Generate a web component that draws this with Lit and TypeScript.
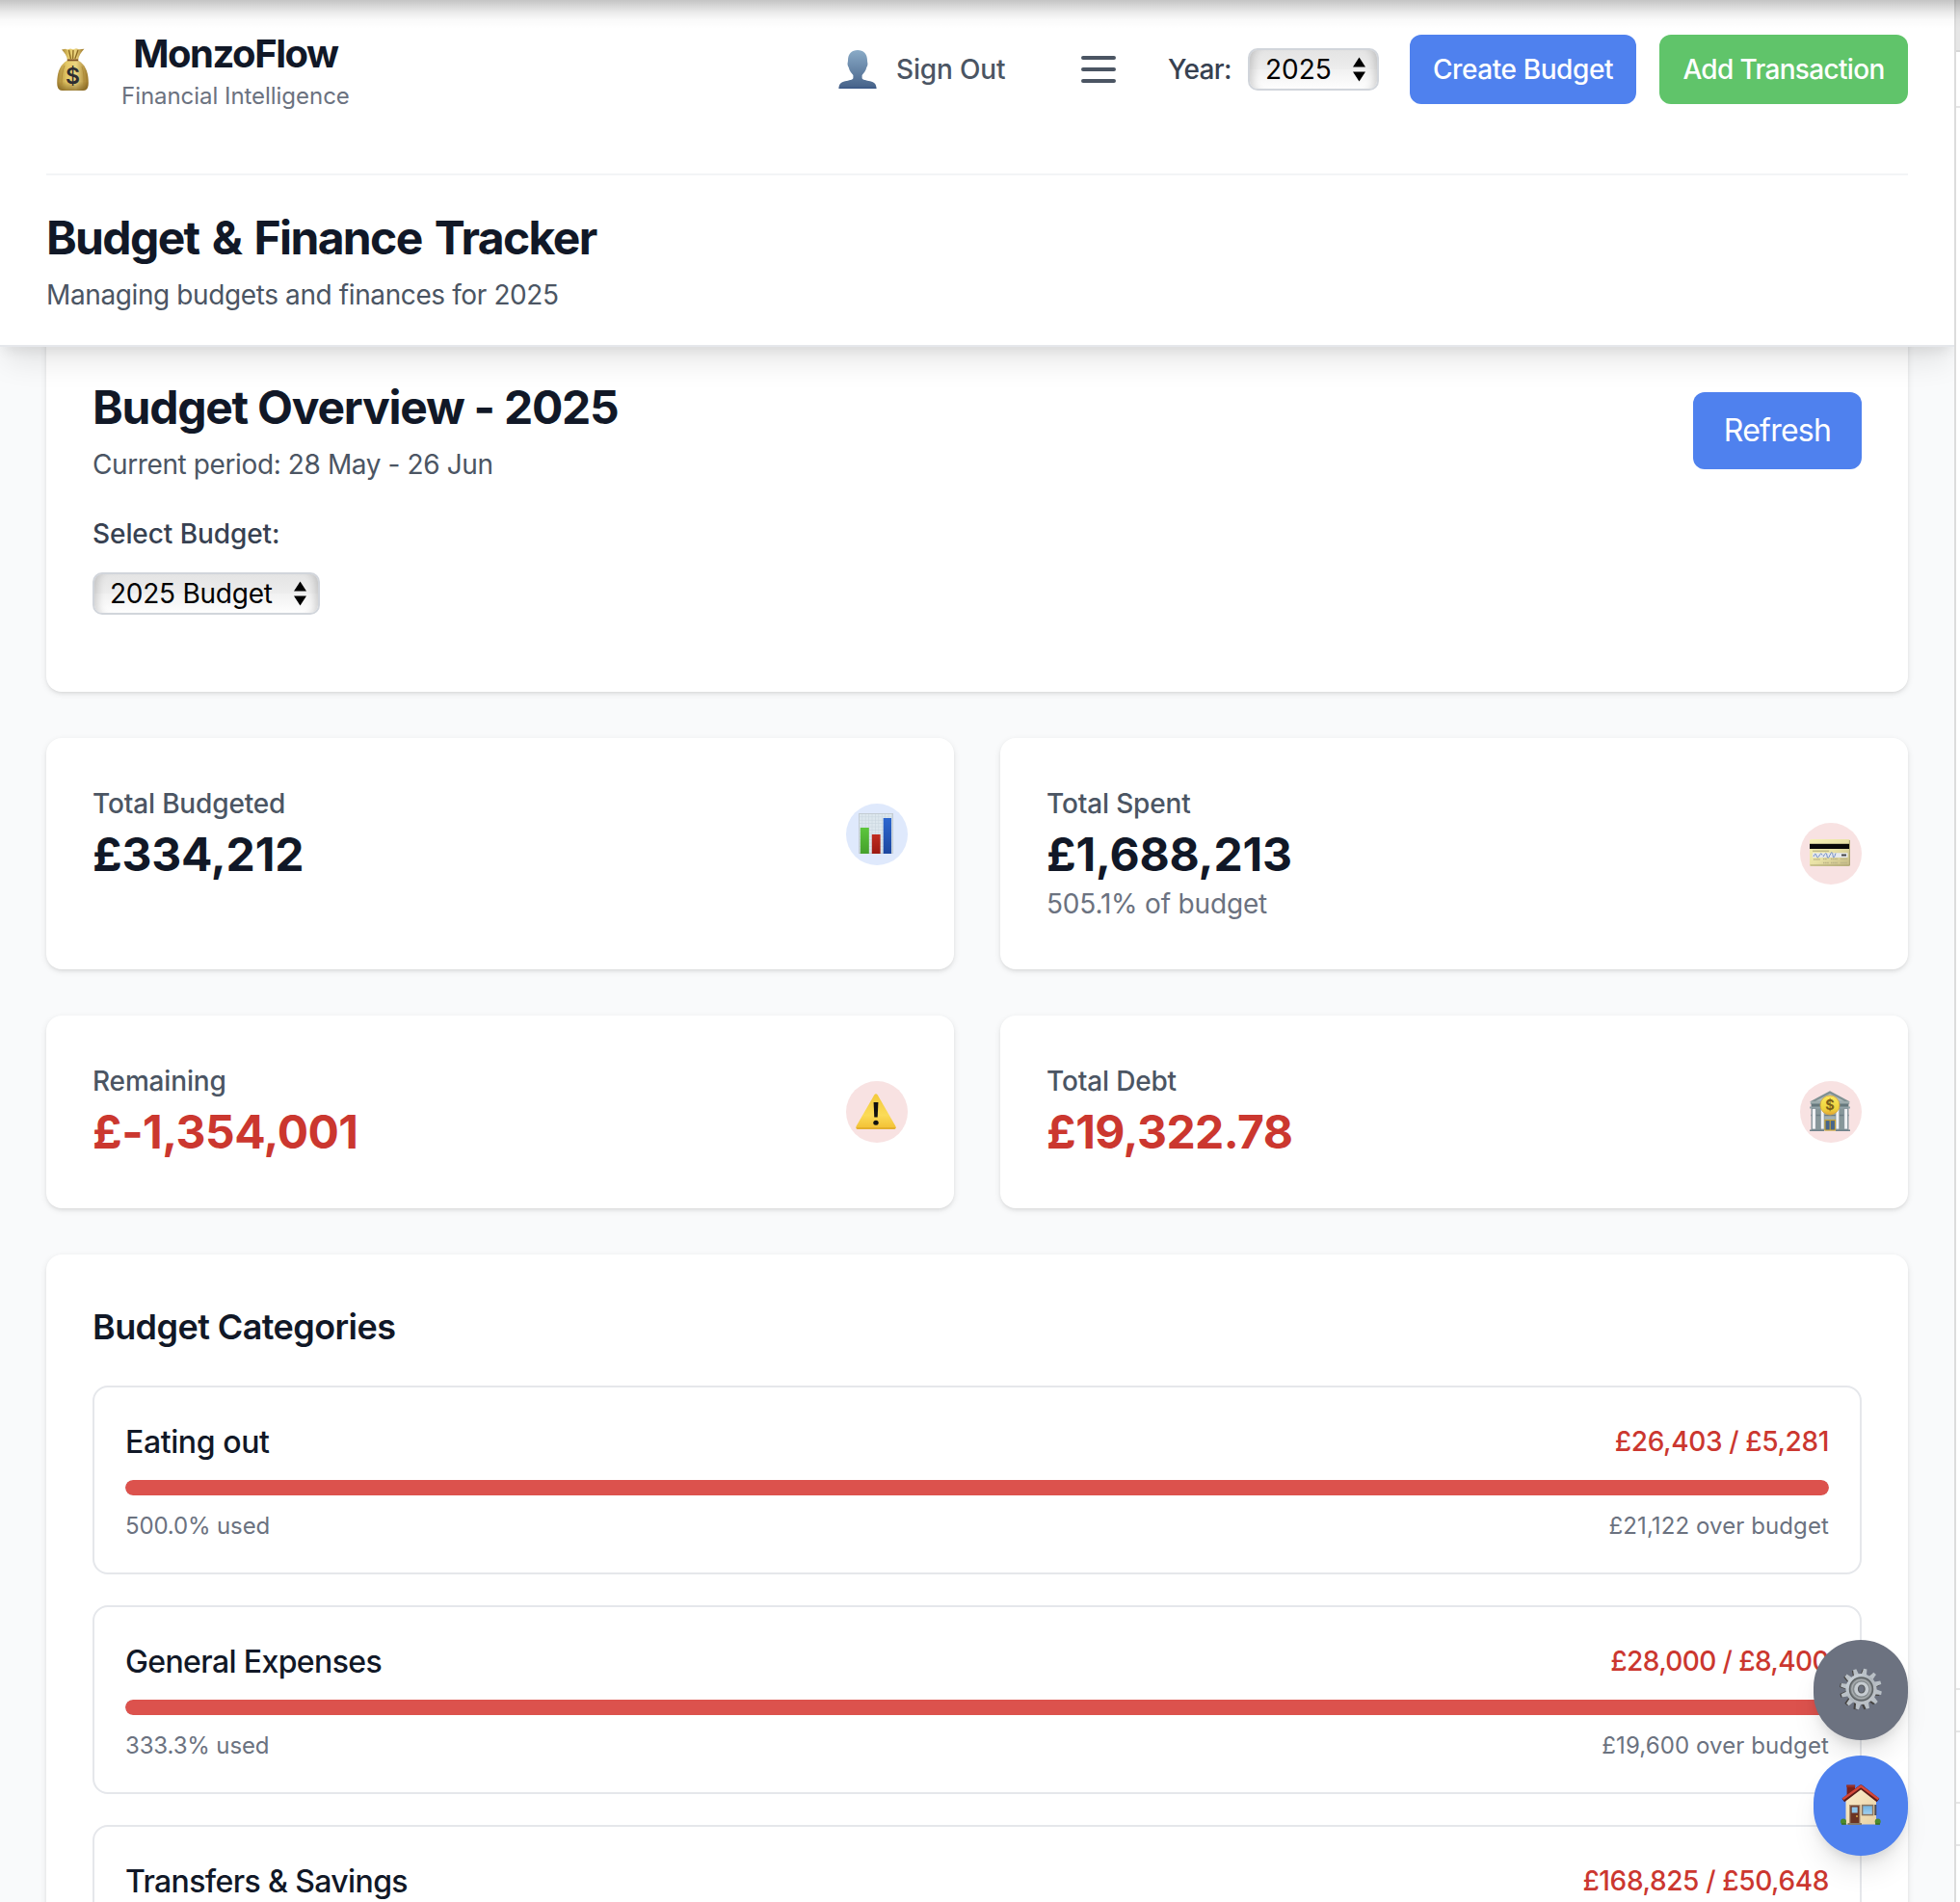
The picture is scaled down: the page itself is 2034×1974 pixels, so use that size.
import { LitElement, html, css, svg } from "lit";
import { customElement, property } from "lit/decorators.js";
import { classMap } from "lit/directives/class-map.js";

interface Stat {
  label: string;
  value: string;
  note?: string;
  icon: string;
  negative?: boolean;
  tint: "blue" | "red";
  tight?: boolean;
}

interface Category {
  name: string;
  spent: number;
  budget: number;
  tight?: boolean;
  tightAmount?: boolean;
}

const STATS: Stat[] = [
  { label: "Total Budgeted", value: "£334,212", icon: "chart", tint: "blue" },
  { label: "Total Spent", value: "£1,688,213", note: "505.1% of budget", icon: "card", tint: "red" },
  { label: "Remaining", value: "£-1,354,001", icon: "warning", tint: "red", negative: true, tight: true },
  { label: "Total Debt", value: "£19,322.78", icon: "bank", tint: "red", negative: true, tight: true },
];

const CATEGORIES: Category[] = [
  { name: "Eating out", spent: 26403, budget: 5281 },
  { name: "General Expenses", spent: 28000, budget: 8400, tight: true, tightAmount: true },
  { name: "Transfers & Savings", spent: 168825, budget: 50648, tight: true },
];

const pounds = (n: number) => "£" + n.toLocaleString("en-GB");

const ICONS: Record<string, { w: number; h: number; art: unknown }> = {
  bag: {
    w: 33,
    h: 44,
    art: svg`
      <defs>
        <linearGradient id="g" x1="0" x2="1"><stop offset="0" stop-color="#a58335"/><stop offset=".3" stop-color="#e3c765"/><stop offset=".6" stop-color="#ecd581"/><stop offset="1" stop-color="#9b7526"/></linearGradient>
        <linearGradient id="v" x1="0" x2="0" y1="0" y2="1"><stop offset=".7" stop-color="#6b4c10" stop-opacity="0"/><stop offset="1" stop-color="#6b4c10" stop-opacity=".6"/></linearGradient>
      </defs>
      <path d="M5 1.4 L9 .8 11 1.6 14 .4 17 1.2 20 .2 23 1.2 28.4 .8 C25.5 4 22.6 8 22 12.5 H11 C10.6 8 8 4.500 5 1.400Z" fill="url(#g)"/>
      <path d="M12.500 2 L14.500 11 M17 2 L16.600 11 M22 2 L18.800 11" stroke="#8c6a22" stroke-width="1.300" fill="none"/>
      <path d="M11 12.500 C4 17 1 23 .3 33 C0 40 1 44 6 44 H27 C32 44 33 40 32.700 33 C32 23 29 17 22 12.500Z" fill="url(#g)"/>
      <path d="M11 12.500 C4 17 1 23 .3 33 C0 40 1 44 6 44 H27 C32 44 33 40 32.700 33 C32 23 29 17 22 12.500Z" fill="url(#v)"/>
      <path d="M10.800 12.400 H22.200" stroke="#7d4f25" stroke-width="1.800"/>
      <path d="M8 18 C5.500 24 5 30 5 38 M26 19 C28 25 28.300 31 28 38" stroke="#a98432" stroke-width="1" fill="none" opacity=".7"/>
      <text x="16.500" y="37.200" text-anchor="middle" font-family="Inter, sans-serif" font-size="23" font-weight="600" fill="#2d2c31">$</text>`,
  },
  person: {
    w: 40,
    h: 40,
    art: svg`
      <defs><linearGradient id="g" x1="0" x2="0" y1="0" y2="1"><stop offset="0" stop-color="#8aabc7"/><stop offset="1" stop-color="#456188"/></linearGradient></defs>
      <path d="M20 0 C26 0 30 4 30 10.500 C30 13 30.800 13.500 30.300 15.500 C30 17 29.500 17 29.300 18 C28.600 21.500 26 24.500 24.600 26 V29 C25 31 29 31.300 33 32.300 C37.500 33.400 39.500 35.500 39.500 40 H.5 C.5 35.500 2.500 33.400 7 32.300 C11 31.300 15 31 15.400 29 V26 C14 24.500 11.400 21.500 10.700 18 C10.500 17 10 17 9.700 15.500 C9.200 13.500 10 13 10 10.500 C10 4 14 0 20 0Z" fill="url(#g)"/>
      <path d="M.8 39.300 H39.200" stroke="#3c5a88" stroke-width="1.400"/>`,
  },
  menu: {
    w: 36,
    h: 28,
    art: svg`<path d="M2 2 H34 M2 14 H34 M2 26 H34" stroke="#4b5563" stroke-width="4" stroke-linecap="round"/>`,
  },
  arrows: {
    w: 13,
    h: 26,
    art: svg`<path d="M6.500 .5 L13 10.500 H0Z M6.500 25.500 L13 15.500 H0Z" fill="#000"/>`,
  },
  chart: {
    w: 36,
    h: 42,
    art: svg`
      <defs>
        <pattern id="p" width="3.400" height="3.400" patternUnits="userSpaceOnUse"><path d="M0 .4 H3.400 M.4 0 V3.400" stroke="#c9d5de" stroke-width=".6"/></pattern>
        <linearGradient id="a" x1="0" x2="0" y1="0" y2="1"><stop offset="0" stop-color="#5cc63c"/><stop offset="1" stop-color="#45a02c"/></linearGradient>
        <linearGradient id="b" x1="0" x2="0" y1="0" y2="1"><stop offset="0" stop-color="#c12c20"/><stop offset="1" stop-color="#9c1a12"/></linearGradient>
        <linearGradient id="c" x1="0" x2="0" y1="0" y2="1"><stop offset="0" stop-color="#2c66cf"/><stop offset="1" stop-color="#1d47a0"/></linearGradient>
      </defs>
      <rect width="36" height="42" fill="#dde7ee"/><rect width="36" height="42" fill="url(#p)"/>
      <rect x=".5" y=".5" width="35" height="41" fill="none" stroke="#c4ccd3"/>
      <rect x="1.800" y="15" width="9" height="27" fill="url(#a)"/>
      <rect x="13.800" y="22" width="8.800" height="20" fill="url(#b)"/>
      <rect x="25.700" y="5" width="8.300" height="37" fill="url(#c)"/>`,
  },
  card: {
    w: 42,
    h: 28,
    art: svg`
      <defs><linearGradient id="g" x1="0" x2="1" y1="0" y2="1"><stop offset="0" stop-color="#f7f3b4"/><stop offset=".5" stop-color="#e9e2a6"/><stop offset="1" stop-color="#c3b883"/></linearGradient></defs>
      <rect width="42" height="28" rx="1.800" fill="url(#g)"/>
      <path d="M.5 27 H41.500 M41.400 1 V27" stroke="#aca375" stroke-width="1"/>
      <rect y="4.800" width="41" height="5.200" fill="#0a0a08"/>
      <rect x="3" y="11.700" width="17" height="1" fill="#b0aa7c"/>
      <rect x="3" y="14.200" width="36.500" height="4.800" fill="#e6e9ee"/>
      <path d="M4 18 Q6 13 7 17 T10 17 T13 16.500 M14 18.200 Q17.500 11.500 18 17 T21 16.500 T24 16.500 T27 14.500" stroke="#7590c4" stroke-width="1" fill="none"/>
      <rect x="33" y="15.500" width="5" height="2" fill="#474747"/>
      <path d="M4 21 H11 M14 20.500 H18 M22 20.500 H29 M32 20.500 H39 M14 24.500 H20 M22 24.500 H29 M32 24.500 H39" stroke="#bbb286" stroke-width="1.300" stroke-dasharray="1.500 .6"/>`,
  },
  warning: {
    w: 42,
    h: 37,
    art: svg`
      <defs><linearGradient id="g" x1="0" x2="0" y1="0" y2="1"><stop offset="0" stop-color="#f3c93a"/><stop offset=".6" stop-color="#fbdb58"/><stop offset="1" stop-color="#f2bf32"/></linearGradient></defs>
      <path d="M19.200 1.400 Q21 -1 22.800 1.400 L41.500 34 Q42.500 37 39.500 37 H2.500 Q-.5 37 .5 34Z" fill="url(#g)"/>
      <path d="M1.500 36 H40.500" stroke="#d9a42a" stroke-width="1.400" stroke-linecap="round" opacity=".8"/>
      <path d="M18.600 9 H23.400 L22.700 24.500 H19.300Z" fill="#111"/>
      <ellipse cx="21" cy="30.300" rx="2.700" ry="2.500" fill="#111"/>`,
  },
  bank: {
    w: 42,
    h: 42,
    art: svg`
      <defs><linearGradient id="g" x1="0" x2="0" y1="0" y2="1"><stop offset="0" stop-color="#fbe75c"/><stop offset=".7" stop-color="#efd33c"/><stop offset="1" stop-color="#e3a534"/></linearGradient></defs>
      <rect x="1.500" y="17" width="39" height="24" fill="#879799"/>
      <path d="M0 11.500 L21 .3 42 11.500Z" fill="#7f9092"/>
      <path d="M6 10.700 L21 2.900 36 10.700Z" fill="#b0bcbb"/>
      <rect x=".8" y="11" width="40.400" height="3" fill="#9dabac"/>
      <rect x="1.600" y="13.500" width="38.800" height="3.500" fill="#65787d"/>
      <rect x="0" y="16.500" width="42" height="2" fill="#93a3a7"/>
      <rect x="12" y="19" width="18" height="22" fill="#a3b1b2"/>
      <path d="M1.500 25.500 H40.500" stroke="#6c7d84" stroke-width="1.500"/>
      <g fill="#f1f3f4" stroke="#7d8b94" stroke-width=".7"><rect x="2.500" y="18.500" width="3.800" height="21.500"/><rect x="11.300" y="18.500" width="3.800" height="21.500"/><rect x="27" y="18.500" width="3.800" height="21.500"/><rect x="35.800" y="18.500" width="3.800" height="21.500"/></g>
      <rect x="16" y="30.500" width="10.500" height="10.500" fill="#46658c" stroke="#c5a236" stroke-width="1.200"/><path d="M21.200 30.500 V41" stroke="#c5a236" stroke-width="1.200"/>
      <path d="M0 41.300 H15 M27 41.300 H42" stroke="#71828a" stroke-width="1.400"/>
      <circle cx="21" cy="15" r="10" fill="url(#g)" stroke="#d9a73b" stroke-width=".8"/>
      <text x="21" y="20.200" text-anchor="middle" font-family="Inter, sans-serif" font-size="14.500" font-weight="700" fill="#7c5f1a">$</text>`,
  },
  gear: {
    w: 44,
    h: 44,
    art: svg`
      <defs><linearGradient id="g" x1="0" x2="1" y1="0" y2="1"><stop offset="0" stop-color="#d3dbe2"/><stop offset=".5" stop-color="#aeb5bb"/><stop offset="1" stop-color="#c6cace"/></linearGradient></defs>
      <g transform="translate(-1 .6)" fill="#44423f">
        ${Array.from({ length: 12 }, (_, i) => svg`<path d="M19.400 8 L20.300 1 H24.200 L25 8Z" transform="rotate(${i * 30 + 12} 22 22)"/>`)}
      </g>
      <g fill="url(#g)">
        ${Array.from({ length: 12 }, (_, i) => svg`<path d="M19.300 8 L20.600 .6 H24 L25 8Z" fill="#b9c0c6" transform="rotate(${i * 30 + 12} 22.500 22)"/>`)}
        <circle cx="22.500" cy="22" r="16"/>
      </g>
      <circle cx="22.500" cy="22" r="12" fill="#858b8e" stroke="#5d6264" stroke-width="1.500"/>
      <circle cx="22.500" cy="22" r="9.700" fill="none" stroke="#a9aeb0" stroke-width="1.300"/>
      <circle cx="22.800" cy="22" r="7.600" fill="#c6ccd1"/>
      <ellipse cx="22.800" cy="22" rx="3.300" ry="4" fill="#6c7280" stroke="#55585b" stroke-width="1.200"/>`,
  },
  house: {
    w: 42,
    h: 42,
    art: svg`
      <defs>
        <linearGradient id="g" x1="0" x2="1" y1="0" y2="1"><stop offset="0" stop-color="#fbeccb"/><stop offset="1" stop-color="#e8d2a4"/></linearGradient>
        <linearGradient id="w" x1="0" x2="0" y1="0" y2="1"><stop offset="0" stop-color="#6fb2e0"/><stop offset="1" stop-color="#a4d1ef"/></linearGradient>
      </defs>
      <rect x="6.600" y="1" width="8.400" height="13" fill="#7c211a"/><rect x="6.200" y=".4" width="9" height="2.400" fill="#9a3128"/>
      <path d="M5.500 16 L21.500 3.500 37 16 V41.500 H5.500Z" fill="url(#g)"/>
      <path d="M36.300 21 V32" stroke="#4c4b55" stroke-width="2"/>
      <path d="M2.800 16.500 L21.200 2.600 39 16.500" fill="none" stroke="#5b1c18" stroke-width="4.400" stroke-linejoin="round"/>
      <path d="M2.500 15.300 L21.200 1.800 39.300 15.300" fill="none" stroke="#d3473a" stroke-width="2.500" stroke-linejoin="round"/>
      <rect x="9" y="21" width="11.500" height="20" fill="#a98f72"/><rect x="10.300" y="22.200" width="9" height="18.800" fill="#6b3424"/>
      <rect x="11.700" y="23.500" width="6" height="6" fill="#8ec5ea"/><circle cx="17" cy="33" r=".9" fill="#e9b64c"/>
      <rect x="22.600" y="21.600" width="11" height="10" fill="url(#w)" stroke="#8a7560" stroke-width="1.500"/>
      <path d="M7.500 41 H22" stroke="#847a6c" stroke-width="2"/>
      <circle cx="3" cy="38.500" r="3" fill="#4d8a2c"/><circle cx="38.700" cy="38.500" r="3" fill="#4d8a2c"/><path d="M1 41 H6 M36 41 H41" stroke="#3d6f22" stroke-width="1.500"/>`,
  },
};

@customElement("app-icon")
export class AppIcon extends LitElement {
  static styles = css`
    :host { display: block; flex: none; }
    svg { display: block; }
  `;

  @property() name = "";

  render() {
    const icon = ICONS[this.name];
    return html`<svg width=${icon.w} height=${icon.h} viewBox="0 0 ${icon.w} ${icon.h}" fill="none">${icon.art}</svg>`;
  }
}

@customElement("select-box")
export class SelectBox extends LitElement {
  static styles = css`
    :host {
      display: flex;
      align-items: center;
      justify-content: space-between;
      box-sizing: border-box;
      height: 44px;
      padding: 0 12px 0 16px;
      border: 2px solid #d1d5db;
      border-radius: 10px;
      background: linear-gradient(#e4e4e4, #ededed 50%, #f1f1f1 51%, #fefefe);
      box-shadow: inset 10px 0 8px -7px rgba(0, 0, 0, 0.17), inset -10px 0 8px -7px rgba(0, 0, 0, 0.17);
      color: #000;
      font-size: 28px;
      line-height: 40px;
      white-space: nowrap;
    }
  `;

  @property() value = "";

  render() {
    return html`<span>${this.value}</span><app-icon name="arrows"></app-icon>`;
  }
}

@customElement("stat-card")
export class StatCard extends LitElement {
  static styles = css`
    :host {
      display: block;
      box-sizing: border-box;
      padding: 48px;
      border-radius: 16px;
      background: #fff;
      box-shadow: 0 2px 6px rgba(0, 0, 0, 0.1), 0 2px 4px -2px rgba(0, 0, 0, 0.1);
    }
    .row { display: flex; align-items: center; justify-content: space-between; height: 104px; }
    .noted { height: 144px; }
    .label { font-size: 28px; line-height: 40px; font-weight: 500; color: #4b5563; letter-spacing: -0.16px; }
    .value { margin-bottom: -2px; font-size: 48px; line-height: 66px; font-weight: 700; color: #111827; letter-spacing: -0.18px; }
    .tight { letter-spacing: -0.53px; }
    .negative { color: #cb372f; }
    .note { font-size: 28px; line-height: 40px; color: #6b7280; letter-spacing: -0.18px; }
    .badge {
      display: flex;
      align-items: center;
      justify-content: center;
      box-sizing: border-box;
      width: 64px;
      height: 64px;
      padding: 0 2px 2px 0;
      border-radius: 50%;
    }
    .blue { background: #dfe9fc; }
    .red { background: #f8e2e2; }
  `;

  @property({ attribute: false }) stat!: Stat;

  render() {
    const s = this.stat;
    return html`
      <div class=${classMap({ row: true, noted: !!s.note })}>
        <div>
          <div class="label">${s.label}</div>
          <div class=${classMap({ value: true, negative: !!s.negative, tight: !!s.tight })}>${s.value}</div>
          ${s.note ? html`<div class="note">${s.note}</div>` : null}
        </div>
        <div class="badge ${s.tint}"><app-icon name=${s.icon}></app-icon></div>
      </div>
    `;
  }
}

@customElement("category-row")
export class CategoryRow extends LitElement {
  static styles = css`
    :host {
      display: block;
      box-sizing: border-box;
      height: 196px;
      padding: 32px;
      border: 2px solid #e5e7eb;
      border-radius: 16px;
    }
    .line { display: flex; align-items: center; justify-content: space-between; }
    .name { margin-bottom: -2px; font-size: 32px; line-height: 50px; font-weight: 500; color: #111827; letter-spacing: -0.4px; }
    .tight { letter-spacing: -0.62px; }
    .amount { font-size: 28px; line-height: 40px; font-weight: 500; color: #cb372f; letter-spacing: -0.37px; }
    .tight-amount { letter-spacing: -0.6px; }
    .track { height: 16px; margin: 16px 0; border-radius: 8px; background: #e5e7eb; overflow: hidden; }
    .fill { height: 100%; border-radius: 8px; background: #dc524d; }
    .meta { font-size: 24px; line-height: 32px; color: #6b7280; }
    .used { letter-spacing: -0.14px; }
    .over { letter-spacing: 0.1px; }
  `;

  @property({ attribute: false }) category!: Category;

  render() {
    const c = this.category;
    const used = (c.spent / c.budget) * 100;
    return html`
      <div class="line">
        <span class=${classMap({ name: true, tight: !!c.tight })}>${c.name}</span>
        <span class=${classMap({ amount: true, "tight-amount": !!c.tightAmount })}>${pounds(c.spent)} / ${pounds(c.budget)}</span>
      </div>
      <div class="track"><div class="fill" style="width:${Math.min(used, 100)}%"></div></div>
      <div class="line meta">
        <span class="used">${used.toFixed(1)}% used</span>
        <span class="over">${pounds(c.spent - c.budget)} over budget</span>
      </div>
    `;
  }
}

@customElement("app-root")
export class AppRoot extends LitElement {
  static styles = css`
    :host {
      display: grid;
      grid-template-columns: 1fr 6px;
      height: 1974px;
      position: relative;
      overflow: hidden;
      font-family: Inter, "Liberation Sans", sans-serif;
      background: #fff;
      color: #111827;
    }
    h1, h2, h3, p { margin: 0; }
    .app { position: relative; min-width: 0; height: 1974px; overflow: hidden; background: #f9fafb; }

    .header {
      position: relative;
      z-index: 2;
      box-sizing: border-box;
      height: 360px;
      padding: 28px 48px 0;
      border-bottom: 2px solid #e5e7eb;
      background: #fff;
      box-shadow: 0 20px 30px -6px rgba(0, 0, 0, 0.1), 0 8px 12px -4px rgba(0, 0, 0, 0.07);
    }
    .bar { display: flex; align-items: center; height: 88px; white-space: nowrap; }
    .bag { padding: 0 34px 0 11px; }
    .brand { display: flex; flex-direction: column; align-items: center; }
    .brand-name { font-size: 40px; line-height: 56px; font-weight: 700; letter-spacing: -1.46px; }
    .brand-tag { font-size: 24px; line-height: 32px; color: #6b7280; letter-spacing: -0.04px; }
    .actions { display: flex; align-items: center; margin-left: auto; font-size: 28px; line-height: 40px; font-weight: 500; }
    .account { display: flex; align-items: center; gap: 20px; color: #4b5563; letter-spacing: -0.16px; }
    .account-label { width: 114px; }
    .menu { padding: 0 54px 0 78px; }
    .year { width: 67px; color: #374151; letter-spacing: -0.62px; }
    .year-select { width: 136px; margin: 0 32px 0 16px; font-weight: 400; }
    .button {
      display: flex;
      align-items: center;
      justify-content: center;
      height: 72px;
      border-radius: 12px;
      color: #fff;
      white-space: nowrap;
    }
    .create { width: 235px; margin-right: 24px; background: #4f81ee; letter-spacing: -0.41px; }
    .add { width: 258px; background: #60c46a; letter-spacing: -0.68px; }
    .intro { margin-top: 64px; padding-top: 33px; border-top: 2px solid #f3f4f6; }
    .title { font-size: 48px; line-height: 64px; font-weight: 700; letter-spacing: -1.65px; word-spacing: 3.5px; }
    .overview-title { letter-spacing: -1.24px; word-spacing: 0; }
    .sub { margin-top: 7px; font-size: 28px; line-height: 40px; color: #4b5563; letter-spacing: -0.39px; }

    .main { display: grid; gap: 48px; margin-top: -17px; padding: 0 48px; }
    .panel {
      box-sizing: border-box;
      padding: 48px;
      border-radius: 16px;
      background: #fff;
      box-shadow: 0 2px 6px rgba(0, 0, 0, 0.1), 0 2px 4px -2px rgba(0, 0, 0, 0.1);
    }
    .overview { height: 375px; }
    .overview-top { display: flex; align-items: center; justify-content: space-between; height: 111px; }
    .refresh { width: 175px; height: 80px; background: #4f81ee; font-size: 32px; letter-spacing: -0.75px; }
    .picker-label { margin: 32px 0 20px; font-size: 28px; line-height: 40px; font-weight: 500; color: #374151; letter-spacing: -0.08px; }
    .budget-select { width: 236px; letter-spacing: -0.25px; }
    .stats { display: grid; grid-template-columns: 1fr 1fr; gap: 48px; }
    .heading { margin-bottom: 34px; font-size: 36px; line-height: 54px; font-weight: 600; letter-spacing: -0.58px; }
    .list { display: grid; gap: 32px; }

    .fabs { position: absolute; right: 48px; bottom: 48px; z-index: 3; display: grid; gap: 16px; }
    .fab {
      display: flex;
      align-items: center;
      justify-content: center;
      box-sizing: border-box;
      width: 98px;
      height: 104px;
      padding-bottom: 2px;
      border-radius: 52px;
      box-shadow: 0 20px 30px -6px rgba(0, 0, 0, 0.1), 0 8px 12px -4px rgba(0, 0, 0, 0.1);
    }
    .settings { background: #6c7280; }
    .home { background: #4f81ee; }

    .side { display: grid; grid-template-rows: 54px 58px 1642px 44px 74px 44px 1fr; border-left: 2px solid #dcdcdc; }
    .side-cell { border-bottom: 2px solid #e6e6e6; }
    .side-first { background: #e6e6e6; border-color: #d6d6d6; }
    .top-shade {
      position: absolute;
      inset: 0 0 auto 0;
      z-index: 4;
      height: 30px;
      background: linear-gradient(rgba(0, 0, 0, 0.23), rgba(0, 0, 0, 0.16) 6px, rgba(0, 0, 0, 0.08) 13px, rgba(0, 0, 0, 0.025) 20px, transparent 30px);
      pointer-events: none;
    }
  `;

  render() {
    return html`
      <div class="app">
        <header class="header">
          <div class="bar">
            <app-icon class="bag" name="bag"></app-icon>
            <div class="brand">
              <span class="brand-name">MonzoFlow</span>
              <span class="brand-tag">Financial Intelligence</span>
            </div>
            <nav class="actions">
              <div class="account">
                <app-icon name="person"></app-icon>
                <span class="account-label">Sign Out</span>
              </div>
              <app-icon class="menu" name="menu"></app-icon>
              <span class="year">Year:</span>
              <select-box class="year-select" value="2025"></select-box>
              <div class="button create">Create Budget</div>
              <div class="button add">Add Transaction</div>
            </nav>
          </div>
          <div class="intro">
            <h1 class="title">Budget &amp; Finance Tracker</h1>
            <p class="sub">Managing budgets and finances for 2025</p>
          </div>
        </header>

        <main class="main">
          <section class="panel overview">
            <div class="overview-top">
              <div>
                <h2 class="title overview-title">Budget Overview - 2025</h2>
                <p class="sub">Current period: 28 May - 26 Jun</p>
              </div>
              <div class="button refresh">Refresh</div>
            </div>
            <div class="picker-label">Select Budget:</div>
            <select-box class="budget-select" value="2025 Budget"></select-box>
          </section>

          <section class="stats">${STATS.map((s) => html`<stat-card .stat=${s}></stat-card>`)}</section>

          <section class="panel">
            <h3 class="heading">Budget Categories</h3>
            <div class="list">${CATEGORIES.map((c) => html`<category-row .category=${c}></category-row>`)}</div>
          </section>
        </main>

        <div class="fabs">
          <div class="fab settings"><app-icon name="gear"></app-icon></div>
          <div class="fab home"><app-icon name="house"></app-icon></div>
        </div>
      </div>
      <aside class="side">
        <div class="side-cell side-first"></div>
        <div class="side-cell"></div>
        <div class="side-cell"></div>
        <div class="side-cell"></div>
        <div class="side-cell"></div>
        <div class="side-cell"></div>
      </aside>
      <div class="top-shade"></div>
    `;
  }
}
